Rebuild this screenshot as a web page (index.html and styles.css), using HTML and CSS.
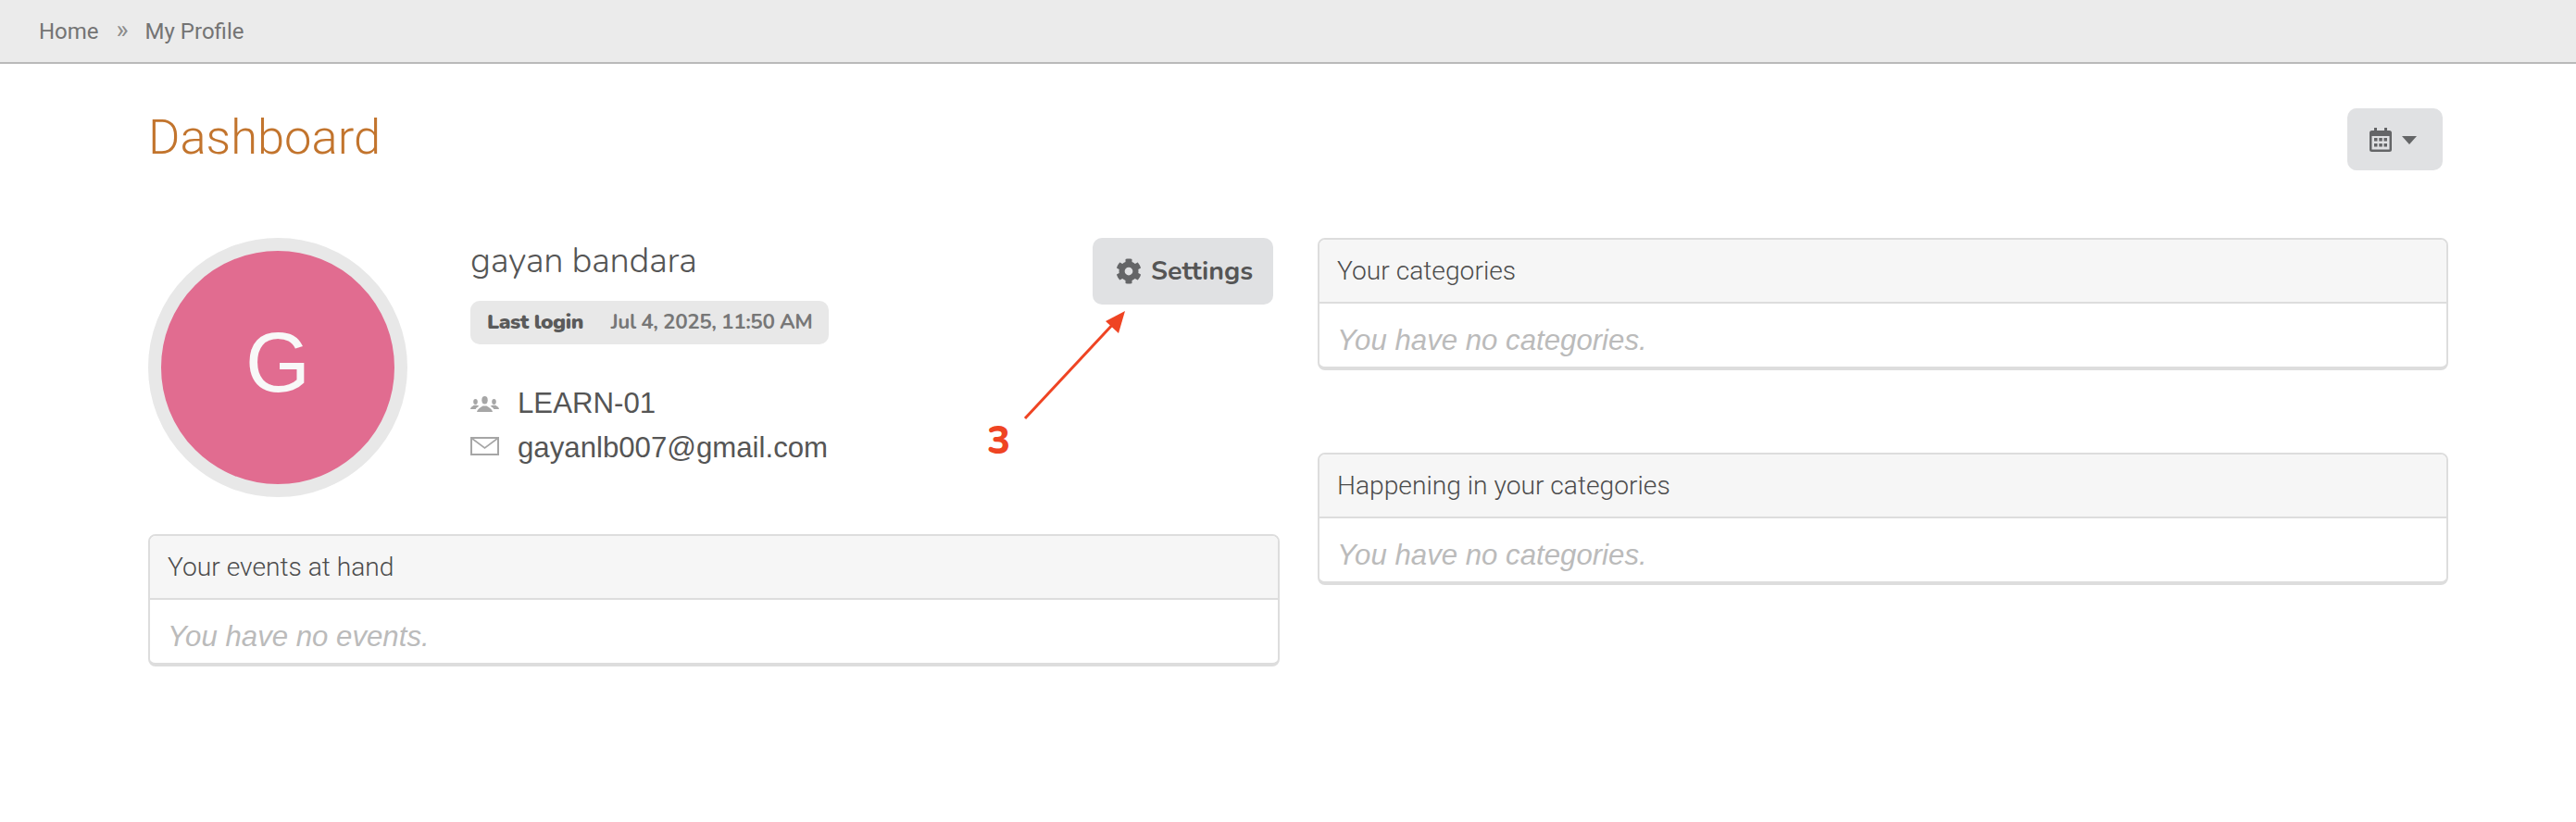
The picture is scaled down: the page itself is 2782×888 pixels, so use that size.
FILE: index.html
```html
<!DOCTYPE html>
<html lang="en">
<head>
<meta charset="utf-8">
<title>Dashboard</title>
<link rel="stylesheet" href="styles.css">
</head>
<body>
<nav class="crumbs"><a>Home</a><span class="sep">»</span><a>My Profile</a></nav>
<main class="page">
  <header class="head">
    <h1>Dashboard</h1>
    <button class="btn cal-btn" type="button">
      <svg class="cal" viewBox="0 0 24 26"><path fill="#646567" d="M5 0h3v3h8V0h3v3h2.500A2.500 2.500 0 0 1 24 5.500v18a2.500 2.500 0 0 1-2.500 2.500h-19A2.500 2.500 0 0 1 0 23.500v-18A2.500 2.500 0 0 1 2.500 3H5z"/><rect x="2.500" y="9" width="19" height="14.500" fill="#e0e1e3"/><g fill="#646567"><rect x="5" y="11" width="3.500" height="3.500"/><rect x="10.300" y="11" width="3.500" height="3.500"/><rect x="15.500" y="11" width="3.500" height="3.500"/><rect x="5" y="17" width="3.500" height="3.500"/><rect x="10.300" y="17" width="3.500" height="3.500"/><rect x="15.500" y="17" width="3.500" height="3.500"/></g></svg>
      <span class="caret"></span>
    </button>
  </header>
  <div class="cols">
    <section class="col">
      <div class="profile">
        <div class="avatar">G</div>
        <div class="info">
          <h2>gayan bandara</h2>
          <div class="badge"><b>Last login</b><span>Jul 4, 2025, 11:50 AM</span></div>
          <ul class="meta">
            <li><svg class="ico" viewBox="0 0 31 17"><g fill="#a6a6a6"><ellipse cx="15.500" cy="4.200" rx="3.200" ry="4.200"/><path d="M7 17c.5-3 3-4.500 6.500-6.500h4c3.500 2 6 3.500 6.500 6.500z"/><ellipse cx="5.500" cy="6" rx="2.300" ry="3"/><path d="M0 14c.3-2 2-3 3.800-4.200h3.400l2.300 1C7.500 11.800 6.300 12.800 5.700 14z"/><ellipse cx="25.500" cy="6" rx="2.300" ry="3"/><path d="M31 14c-.3-2-2-3-3.800-4.200h-3.400l-2.300 1c2 1 3.200 2 3.800 3.200z"/></g></svg>LEARN-01</li>
            <li><svg class="ico mail" viewBox="0 0 31 20"><rect x="1" y="1" width="29" height="18" fill="#fff" stroke="#a6a6a6" stroke-width="2"/><path d="M1.500 1.500 15.500 12l14-10.500" fill="none" stroke="#a6a6a6" stroke-width="1.600"/></svg>gayanlb007@gmail.com</li>
          </ul>
        </div>
        <button class="btn set-btn" type="button">
          <svg class="gear" viewBox="0 0 512 512"><path fill="#646567" d="M487.400 315.700l-42.600-24.600c4.300-23.200 4.300-47 0-70.200l42.600-24.600c4.900-2.800 7.100-8.600 5.500-14-11.100-35.600-30-67.800-54.700-94.600-3.800-4.100-10-5.100-14.800-2.300L380.800 110c-17.900-15.400-38.500-27.300-60.800-35.100V25.800c0-5.600-3.900-10.500-9.400-11.700-36.700-8.200-74.300-7.800-109.200 0-5.500 1.200-9.400 6.100-9.400 11.700V75c-22.200 7.900-42.800 19.800-60.800 35.100L88.700 85.500c-4.900-2.800-11-1.900-14.800 2.300-24.700 26.700-43.600 58.900-54.700 94.600-1.700 5.400.6 11.200 5.500 14L67.300 221c-4.300 23.200-4.300 47 0 70.200l-42.600 24.600c-4.900 2.800-7.100 8.600-5.500 14 11.100 35.600 30 67.800 54.700 94.600 3.800 4.100 10 5.100 14.800 2.300l42.600-24.600c17.900 15.400 38.500 27.300 60.800 35.100v49.200c0 5.600 3.900 10.500 9.400 11.700 36.700 8.200 74.300 7.800 109.200 0 5.500-1.200 9.400-6.100 9.400-11.700v-49.200c22.200-7.900 42.800-19.800 60.800-35.100l42.600 24.600c4.900 2.800 11 1.900 14.800-2.300 24.700-26.700 43.600-58.900 54.700-94.600 1.500-5.500-.7-11.300-5.600-14.100zM256 336c-44.100 0-80-35.900-80-80s35.900-80 80-80 80 35.900 80 80-35.900 80-80 80z"/></svg>
          <span>Settings</span>
        </button>
        <svg class="arrow" viewBox="0 0 120 130"><path d="M6 125 103 21" stroke="#ef4423" stroke-width="3" fill="none"/><path d="M114 9 93 20 107 33z" fill="#ef4423"/></svg>
        <span class="step">3</span>
      </div>
      <article class="panel">
        <h3>Your events at hand</h3>
        <p>You have no events.</p>
      </article>
    </section>
    <section class="col col-right">
      <article class="panel">
        <h3>Your categories</h3>
        <p>You have no categories.</p>
      </article>
      <article class="panel">
        <h3>Happening in your categories</h3>
        <p>You have no categories.</p>
      </article>
    </section>
  </div>
</main>
</body>
</html>
```

FILE: styles.css
```css
* { box-sizing: border-box; }
html, body { margin: 0; padding: 0; background: #fff; }
body { font-family: Roboto, sans-serif; color: #555; height: 888px; overflow: hidden; }

.crumbs {
  height: 69px;
  background: #ebebeb;
  border-bottom: 2px solid #b9b9b9;
  padding-left: 42px;
  display: flex;
  align-items: center;
  gap: 19px;
  font-size: 24px;
  color: #747474;
}
.sep { color: #8c8c8c; font-size: 28px; line-height: 1; width: 12px; margin-top: -4px; }

.page { padding: 0 138px 0 160px; }

.head {
  height: 188px;
  display: flex;
  justify-content: space-between;
  align-items: flex-start;
}
.head h1 {
  margin: 48px 0 0;
  font-family: Roboto, sans-serif;
  font-weight: 300;
  font-size: 52.500px;
  line-height: 62px;
  color: #c2742d;
}

.btn {
  border: 0;
  border-radius: 10px;
  background: #e0e1e3;
  display: flex;
  align-items: center;
  padding: 0;
  color: #555;
}
.cal-btn {
  width: 103px;
  height: 67px;
  margin: 48px 6px 0 0;
  padding-left: 24px;
  gap: 11px;
}
.cal { width: 24px; height: 26px; }
.caret {
  width: 0;
  height: 0;
  margin-top: 1px;
  border-left: 8px solid transparent;
  border-right: 8px solid transparent;
  border-top: 9px solid #646567;
}

.cols {
  display: grid;
  grid-template-columns: 1222px 1221px;
  column-gap: 41px;
}
.col-right { display: flex; flex-direction: column; gap: 89px; }

.profile {
  position: relative;
  display: flex;
  height: 280px;
  margin-bottom: 40px;
}
.avatar {
  width: 280px;
  height: 280px;
  flex: none;
  border-radius: 50%;
  border: 14px solid #e8e8e8;
  background: #e16c90;
  color: #f8f8f8;
  font: 90px/242px "Liberation Sans", Arial, sans-serif;
  text-align: center;
}
.info { margin-left: 68px; flex: none; width: 400px; }
.info h2 {
  margin: 0;
  padding-top: 1px;
  font: 300 38px/48px Nunito, Lato, sans-serif;
  letter-spacing: -0.300px;
  color: #555;
}
.badge {
  display: inline-flex;
  align-items: center;
  gap: 30px;
  height: 47px;
  margin-top: 19px;
  padding: 0 18px;
  background: #e8e8e8;
  border-radius: 10px;
  font: 700 22.500px/1 Nunito, Lato, sans-serif;
  letter-spacing: -0.450px;
  color: #666;
  white-space: nowrap;
}
.badge b { color: #5a5a5a; }
.badge span { font-weight: 700; color: #777; }

.meta {
  list-style: none;
  margin: 40px 0 0;
  padding: 0;
  font: 31.200px/48px "Liberation Sans", Arial, sans-serif;
  color: #555;
}
.meta li { display: flex; align-items: center; gap: 20px; white-space: nowrap; }
.ico { width: 31px; height: 17px; flex: none; }
.ico.mail { height: 20px; margin-top: -4px; }

.set-btn {
  position: absolute;
  top: 0;
  left: 1020px;
  width: 195px;
  height: 72px;
  padding-left: 25px;
  gap: 10px;
  font: 700 28.600px/1 Nunito, Lato, sans-serif;
}
.gear { width: 28px; height: 28px; flex: none; }

.arrow {
  position: absolute;
  left: 941px;
  top: 70px;
  width: 120px;
  height: 130px;
}
.step {
  position: absolute;
  left: 906px;
  top: 195px;
  font: 800 42px/50px Nunito, Lato, sans-serif;
  color: #ef4423;
}

.panel {
  border: 2px solid #ddd;
  border-bottom-width: 4px;
  border-radius: 8px;
  height: 143px;
  overflow: hidden;
}
.panel h3 {
  margin: 0;
  height: 69px;
  background: #f6f6f6;
  border-bottom: 2px solid #ddd;
  padding-left: 19px;
  font: 300 28.200px/67px Roboto, sans-serif;
  color: #4c4c4c;
}
.panel p {
  margin: 0;
  padding: 7px 0 0 19px;
  font: italic 31.200px/66px "Liberation Sans", Arial, sans-serif;
  color: #bbb;
}
```
